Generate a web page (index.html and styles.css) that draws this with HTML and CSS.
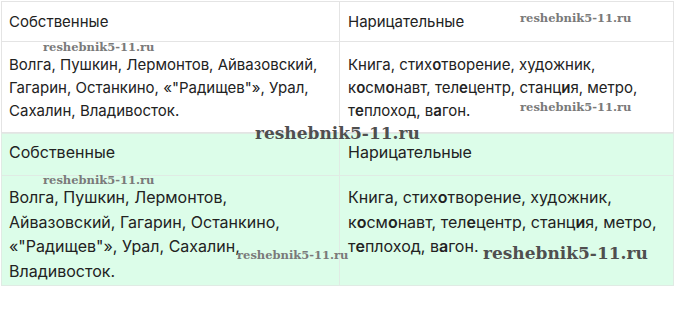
FILE: index.html
```html
<!DOCTYPE html>
<html lang="ru">
<head>
<meta charset="utf-8">
<link rel="stylesheet" href="styles.css">
</head>
<body>
<div class="page">
  <table class="grid grid-plain">
    <tr class="head">
      <td class="col-left">Собственные</td>
      <td class="col-right">Нарицательные</td>
    </tr>
    <tr class="body">
      <td class="col-left">Волга, Пушкин, Лермонтов, Айвазовский, Гагарин, Останкино, «"Радищев"», Урал, Сахалин, Владивосток.</td>
      <td class="col-right">Книга, стих<b>о</b>творение, художник, к<b>о</b>см<b>о</b>навт, тел<b>е</b>центр, станц<b>и</b>я, метро, т<b>е</b>плоход, в<b>а</b>гон.</td>
    </tr>
  </table>
  <table class="grid grid-green">
    <tr class="head">
      <td class="col-left">Собственные</td>
      <td class="col-right">Нарицательные</td>
    </tr>
    <tr class="body">
      <td class="col-left">Волга, Пушкин, Лермонтов, Айвазовский, Гагарин, Останкино, «"Радищев"», Урал, Сахалин, Владивосток.</td>
      <td class="col-right">Книга, стих<b>о</b>творение, художник, к<b>о</b>см<b>о</b>навт, тел<b>е</b>центр, станц<b>и</b>я, метро, т<b>е</b>плоход, в<b>а</b>гон.</td>
    </tr>
  </table>
  <span class="wm wm-1">reshebnik5-11.ru</span>
  <span class="wm wm-2">reshebnik5-11.ru</span>
  <span class="wm wm-3">reshebnik5-11.ru</span>
  <span class="wm wm-big wm-4">reshebnik5-11.ru</span>
  <span class="wm wm-5">reshebnik5-11.ru</span>
  <span class="wm wm-6">reshebnik5-11.ru</span>
  <span class="wm wm-big wm-7">reshebnik5-11.ru</span>
</div>
</body>
</html>
```

FILE: styles.css
```css
html, body {
  margin: 0;
  padding: 0;
  background: #ffffff;
}

.page {
  position: relative;
  width: 680px;
  height: 319px;
  padding: 1px 0 0 1px;
  box-sizing: border-box;
  font-family: Inter, "Noto Sans", sans-serif;
  color: #222222;
}

.grid {
  width: 673px;
  border-collapse: collapse;
  table-layout: fixed;
}

.grid td {
  border: 1px solid #e4e4e4;
  vertical-align: top;
  text-align: left;
}

.grid .col-left { width: 338px; padding-left: 7px; padding-right: 8px; }
.grid .col-right { padding-left: 8px; padding-right: 8px; }

.grid b { font-weight: 600; }

.grid-plain { font-size: 15px; line-height: 23px; }
.grid-plain .head td { height: 39px; padding-top: 8px; padding-bottom: 8px; box-sizing: border-box; }
.grid-plain .body td { padding-top: 11px; padding-bottom: 10px; }

.grid-green { font-size: 16px; line-height: 24.5px; background: #dcfde9; }
.grid-green td { border-color: #e0ebe4; }
.grid-green .head td { height: 42px; padding-top: 6px; padding-bottom: 10px; box-sizing: border-box; }
.grid-green .body td { padding-top: 9px; padding-bottom: 2px; }

.wm {
  position: absolute;
  font-family: "DejaVu Serif", "Liberation Serif", serif;
  font-weight: 700;
  font-size: 11.5px;
  line-height: 14px;
  color: #7a7a7a;
  white-space: nowrap;
}

.wm-big { font-size: 17px; line-height: 20px; color: #4f4f4f; }

.wm-1 { left: 520px; top: 11px; }
.wm-2 { left: 43px; top: 40px; }
.wm-3 { left: 520px; top: 100px; }
.wm-4 { left: 255px; top: 123px; }
.wm-5 { left: 43px; top: 173px; }
.wm-6 { left: 237px; top: 248px; }
.wm-7 { left: 483px; top: 243px; }
```
